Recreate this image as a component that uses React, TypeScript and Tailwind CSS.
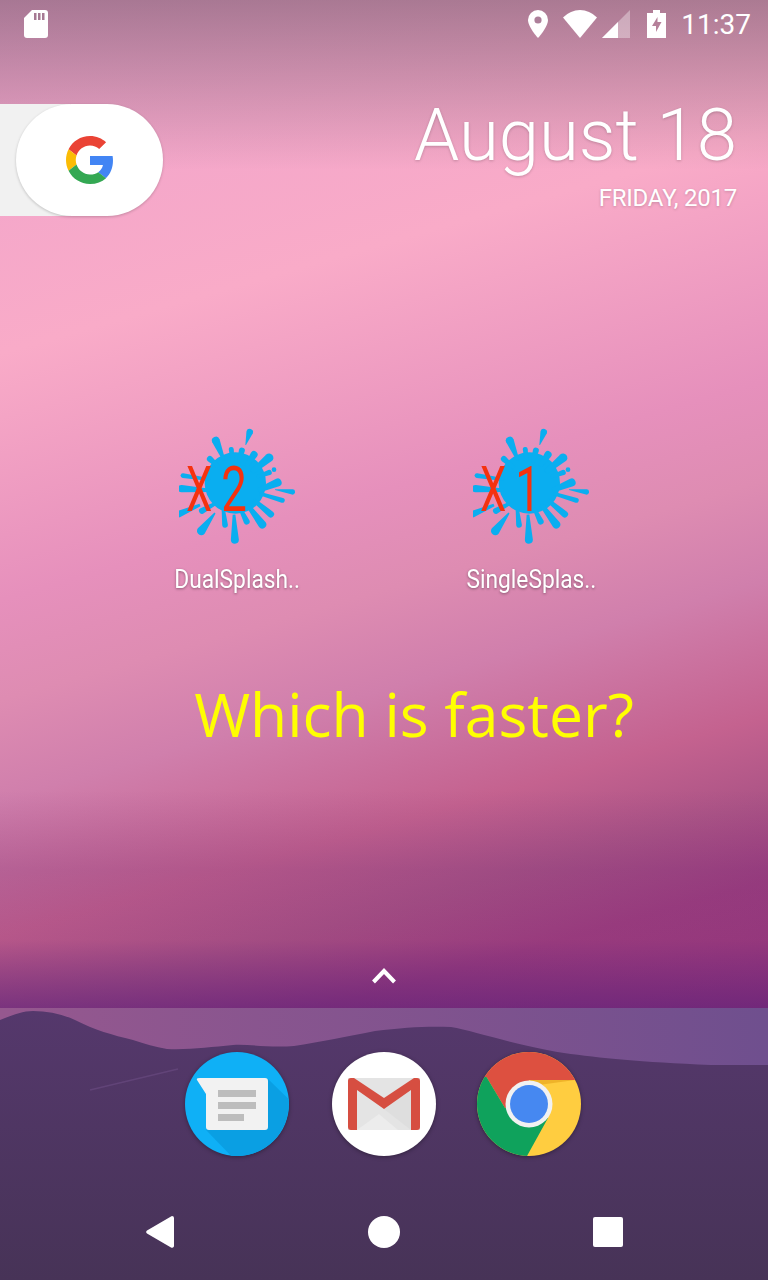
const roboto = "font-['Roboto',sans-serif]";

// drops of the splash: outer tip, inner end, bulb width, width at inner end
type Drop = [number, number, number, number, number, number];

const drops: Drop[] = [
  [272, 28, 257, 76, 20, 2],
  [163, 52, 192, 122, 24, 8],
  [213, 82, 218, 125, 15, 10],
  [248, 84, 236, 128, 18, 10],
  [288, 96, 258, 140, 22, 12],
  [337, 106, 275, 158, 26, 14],
  [335, 156, 290, 172, 16, 10],
  [364, 184, 295, 212, 24, 14],
  [405, 218, 345, 210, 16, 2],
  [374, 244, 300, 222, 15, 10],
  [340, 290, 280, 240, 20, 12],
  [314, 324, 262, 255, 24, 12],
  [264, 314, 240, 265, 18, 10],
  [225, 372, 222, 285, 24, 8],
  [196, 324, 190, 270, 17, 10],
  [116, 344, 165, 280, 26, 4],
  [118, 278, 165, 252, 18, 10],
  [54, 206, 150, 212, 22, 10],
  [62, 167, 150, 180, 14, 8],
  [48, 287, 120, 256, 20, 8],
  [143, 112, 180, 145, 18, 10],
];

const dropPath = ([x1, y1, x2, y2, w, n]: Drop) => {
  const dx = x2 - x1;
  const dy = y2 - y1;
  const len = Math.hypot(dx, dy);
  const ux = dx / len;
  const uy = dy / len;
  const r = w / 2;
  const cx = x1 + ux * r;
  const cy = y1 + uy * r;
  return `M${cx - uy * r} ${cy + ux * r}A${r} ${r} 0 1 1 ${cx + uy * r} ${cy - ux * r}L${x2 + (uy * n) / 2} ${y2 - (ux * n) / 2}L${x2 - (uy * n) / 2} ${y2 + (ux * n) / 2}Z`;
};

const SplashIcon = ({ digit }: { digit: string }) => (
  <svg viewBox="57 25 348 348" className="w-[116px] h-[116px]">
    <circle cx="226" cy="190" r="92" fill="#0aaef0" />
    {drops.map((d, i) => (
      <path key={i} d={dropPath(d)} fill="#0aaef0" />
    ))}
    <circle cx="342" cy="150" r="7" fill="#0aaef0" />
    <g fill="#f5320f" fontFamily="Roboto, sans-serif" fontSize="190">
      <text transform="translate(78 275) scale(0.66 1)">X</text>
      <text transform="translate(184 275) scale(0.72 1)">{digit}</text>
    </g>
  </svg>
);

const AppIcon = ({ digit, label }: { digit: string; label: string }) => (
  <div className="flex w-[140px] flex-col items-center">
    <SplashIcon digit={digit} />
    <span className={`${roboto} mt-[21px] scale-x-[0.91] text-[25px] leading-[30px] text-white whitespace-nowrap [text-shadow:0_1px_3px_rgba(0,0,0,0.4)]`}>
      {label}
    </span>
  </div>
);

const StatusBar = () => (
  <div className="flex h-[48px] items-center justify-between pl-6 pr-[17px] text-white">
    <svg viewBox="0 0 24 28" className="w-[24px] h-[28px]" fill="white">
      <path d="M8 0h13a3 3 0 0 1 3 3v22a3 3 0 0 1-3 3H3a3 3 0 0 1-3-3V8z" />
      <path d="M10 3h2.5v7H10zM14 3h2.5v7H14zM18 3h2.5v7H18z" fill="#a67a94" />
    </svg>
    <div className="flex items-center">
      <svg viewBox="0 0 20 28" className="w-[20px] h-[28px]">
        <path d="M10 0a10 10 0 0 1 10 10c0 7-10 18-10 18S0 17 0 10A10 10 0 0 1 10 0z" fill="white" />
        <circle cx="10" cy="10" r="3.6" fill="#ad7f9a" />
      </svg>
      <svg viewBox="0 0 34 28" className="ml-[15px] w-[34px] h-[28px]" fill="white">
        <path d="M0 7.5Q7.5 0 17 0t17 7.5L17 28z" />
      </svg>
      <svg viewBox="0 0 28 28" className="ml-[5px] w-[28px] h-[28px]">
        <path d="M28 0v28H0z" fill="white" fillOpacity="0.35" />
        <path d="M16 12v16H0z" fill="white" />
      </svg>
      <svg viewBox="0 0 19 28" className="ml-[17px] w-[19px] h-[28px]">
        <path fillRule="evenodd" d="M6 0h7v3h6v25H0V3h6zM10.500 7 5 16h4v6l5.500-10h-4z" fill="white" />
      </svg>
      <span className={`${roboto} ml-[15px] pt-[2px] text-[28px] leading-[48px]`}>11:37</span>
    </div>
  </div>
);

const GoogleWidget = () => (
  <div className="h-[112px] w-[163px] bg-[linear-gradient(to_right,#f1f1f1_70px,transparent_70px)] pl-4">
    <div className="flex h-full w-[147px] items-center justify-center rounded-full bg-white shadow-[0_1px_3px_rgba(0,0,0,0.2)]">
      <svg viewBox="0 0 48 48" className="w-[48px] h-[48px]">
        <path fill="#EA4335" d="M24 9.500c3.540 0 6.710 1.220 9.210 3.600l6.850-6.850C35.900 2.380 30.470 0 24 0 14.620 0 6.510 5.380 2.560 13.220l7.980 6.190C12.430 13.720 17.740 9.500 24 9.500z" />
        <path fill="#4285F4" d="M46.980 24.550c0-1.570-.15-3.090-.38-4.550H24v9.020h12.940c-.58 2.960-2.260 5.480-4.780 7.180l7.730 6c4.510-4.180 7.090-10.360 7.090-17.650z" />
        <path fill="#FBBC05" d="M10.530 28.590c-.5-1.450-.78-2.990-.78-4.590s.27-3.140.78-4.590l-7.980-6.190C.92 16.460 0 20.120 0 24c0 3.880.92 7.540 2.560 10.780l7.970-6.190z" />
        <path fill="#34A853" d="M24 48c6.480 0 11.930-2.130 16.030-5.810l-7.730-6c-2.150 1.450-4.920 2.300-8.300 2.300-6.260 0-11.570-4.220-13.470-9.910l-7.980 6.190C6.510 42.620 14.620 48 24 48z" />
      </svg>
    </div>
  </div>
);

const DateWidget = () => (
  <div className={`${roboto} -mt-[4px] flex flex-col items-end pr-[31px] text-white [text-shadow:0_1px_3px_rgba(0,0,0,0.2)]`}>
    <span className="text-[72.5px] font-light leading-[72px] whitespace-nowrap">August 18</span>
    <span className="mt-[11px] text-[24px] leading-[30px] tracking-[-0.25px] whitespace-nowrap">FRIDAY, 2017</span>
  </div>
);

const MessagesIcon = () => (
  <svg viewBox="0 0 104 104" className="w-[104px] h-[104px] drop-shadow-[0_1px_2px_rgba(0,0,0,0.35)]">
    <circle cx="52" cy="52" r="52" fill="#0fb0f6" />
    <path d="M83 27 103.500 47A52 52 0 0 1 46 103.700L21 78z" fill="#0a9fe3" />
    <path d="M15 26h65a3 3 0 0 1 3 3v46a3 3 0 0 1-3 3H24a3 3 0 0 1-3-3V42L12 28q-1-2 3-2z" fill="#f2f2f2" />
    <path d="M33 38h38v7H33zM33 50h38v7H33zM33 62h26v7H33z" fill="#bdbdbd" />
  </svg>
);

const GmailIcon = () => (
  <svg viewBox="0 0 104 104" className="w-[104px] h-[104px] drop-shadow-[0_1px_2px_rgba(0,0,0,0.35)]">
    <circle cx="52" cy="52" r="52" fill="white" />
    <path d="M16 26h72v52H16z" fill="#e4e4e4" />
    <path d="M25 78 47 62 66 78z" fill="#ececec" />
    <path d="M52 57 79 78V38z" fill="#dedede" />
    <path d="M19 26h3l30 20 30-20h3a3 3 0 0 1 3 3v46a3 3 0 0 1-3 3h-6V38L52 57 25 38v40h-6a3 3 0 0 1-3-3V29a3 3 0 0 1 3-3z" fill="#d64e41" />
  </svg>
);

const ChromeIcon = () => (
  <svg viewBox="0 0 104 104" className="w-[104px] h-[104px] drop-shadow-[0_1px_2px_rgba(0,0,0,0.35)]">
    <defs>
      <clipPath id="chrome-disc">
        <circle cx="52" cy="52" r="52" />
      </clipPath>
    </defs>
    <g clipPath="url(#chrome-disc)">
      <rect width="104" height="104" fill="#ffcd40" />
      <path d="M9.500 25 28 56 52 52 52 28H104V0H0V25z" fill="#dd5040" />
      <path d="M9.500 25 28 56 52 52 71 66 50 104H0V25z" fill="#0fa25c" />
      <path d="M52 28H98L62 33z" fill="#e8a820" fillOpacity="0.7" />
    </g>
    <circle cx="52" cy="52" r="23.500" fill="#f1f1f1" />
    <circle cx="52" cy="52" r="19" fill="#4688f1" />
  </svg>
);

const Dock = () => (
  <div className="relative h-[272px] bg-[linear-gradient(to_right,#96588f,#6f4f8e)]">
    <svg viewBox="0 0 768 272" className="absolute inset-0 w-[768px] h-[272px]">
      <defs>
        <linearGradient id="hill-fill" x1="0" y1="0" x2="0" y2="1">
          <stop offset="0" stopColor="#55386c" />
          <stop offset="1" stopColor="#473357" />
        </linearGradient>
      </defs>
      <path
        d="M0 12C10 8 22 3 33 3 48 3 62 6 75 12 95 22 112 27 133 32 145 36 155 39 167 41 190 42 210 39 233 37 250 36 270 40 294 38 320 34 345 29 375 23 405 19 430 18 451 19 475 23 510 36 564 45 600 50 640 54 711 57 735 57 750 57 768 57V272H0z"
        fill="url(#hill-fill)"
      />
      <path d="M90 82 178 61" fill="none" stroke="#6d4c84" strokeOpacity="0.6" strokeWidth="1.500" />
    </svg>
    <div className="relative flex flex-col items-center pt-[44px]">
      <div className="mr-[2px] flex items-center gap-[43px]">
        <MessagesIcon />
        <GmailIcon />
        <div className="ml-[-2px]">
          <ChromeIcon />
        </div>
      </div>
      <div className="mt-[60px] flex w-[768px] items-center justify-between pl-[146px] pr-[145px]">
        <svg viewBox="0 0 28 32" className="w-[28px] h-[32px]">
          <path d="M26 0a2 2 0 0 1 2 2v28a2 2 0 0 1-3 1.500L1 17.500a2 2 0 0 1 0-3L25 .500z" fill="white" />
        </svg>
        <div className="h-[32px] w-[32px] rounded-full bg-white" />
        <div className="h-[30px] w-[30px] rounded-[2px] bg-white" />
      </div>
    </div>
  </div>
);

export default function App() {
  return (
    <div className="flex h-[1280px] w-[768px] flex-col overflow-hidden bg-[linear-gradient(to_bottom,rgba(70,60,70,0.42),rgba(70,60,70,0)_170px),linear-gradient(to_bottom,rgba(100,35,115,0)_790px,rgba(100,35,115,0.2)_870px,rgba(110,30,110,0.16)_940px,rgba(90,30,120,0.62)_1008px),linear-gradient(164deg,#eea2cc_0px,#f9abc8_340px,#e690bc_577px,#de8cb2_673px,#d07fac_769px,#c4628f_900px,#ac5486_981px,#a04080_1058px,#98387e_1180px)]">
      <StatusBar />
      <div className="mt-[56px] flex items-start justify-between">
        <GoogleWidget />
        <DateWidget />
      </div>
      <div className="mt-[212px] flex justify-center gap-[154px]">
        <AppIcon digit="2" label="DualSplash.." />
        <AppIcon digit="1" label="SingleSplas.." />
      </div>
      <div className="mt-[79px] flex justify-center pl-[60px] font-['Open_Sans',sans-serif] text-[60.6px] leading-[80px] text-[#ffff00] whitespace-nowrap">
        Which is faster?
      </div>
      <div className="flex flex-1 items-end justify-center pb-[24px]">
        <svg viewBox="0 0 24 16" className="w-[24px] h-[16px]">
          <path d="M1.500 14 12 3l10.500 11" fill="none" stroke="white" strokeWidth="4" />
        </svg>
      </div>
      <Dock />
    </div>
  );
}
